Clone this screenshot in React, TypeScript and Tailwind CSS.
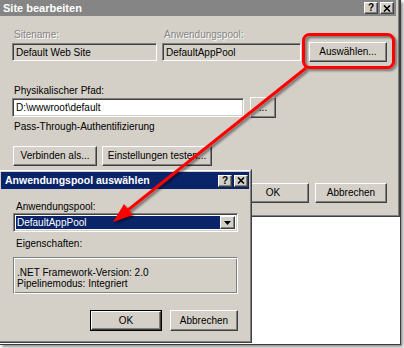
import React from 'react';

// Win2000 classic look: raised buttons, sunken fields
const RAISED =
  'bg-[#d4d0c8] border border-t-white border-l-white border-r-[#404040] border-b-[#404040] shadow-[inset_-1px_-1px_0_#808080]';
const SUNKEN =
  'border border-t-[#808080] border-l-[#808080] border-r-white border-b-white shadow-[inset_1px_1px_0_#404040,inset_-1px_-1px_0_#d4d0c8]';
const DISABLED_LABEL = 'text-[#858585] [text-shadow:1px_1px_0_#ffffff]';

const Btn: React.FC<{ className?: string; children: React.ReactNode }> = ({ className = '', children }) => (
  <div className={`flex items-center justify-center leading-none ${RAISED} ${className}`}>{children}</div>
);

const CaptionButtons: React.FC = () => (
  <div className="flex gap-[2px]">
    <div className={`w-[14px] h-[12px] flex items-center justify-center ${RAISED}`}>
      <span className="text-[10px] font-bold leading-none text-black">?</span>
    </div>
    <div className={`w-[14px] h-[12px] flex items-center justify-center ${RAISED}`}>
      <svg width="8" height="7" viewBox="0 0 8 7">
        <path d="M1 0.5 L7 6.5 M7 0.5 L1 6.5" stroke="#000" strokeWidth="1.6" />
      </svg>
    </div>
  </div>
);

const SiteDialog: React.FC = () => (
  <div className="absolute left-0 top-0 w-[400px] h-[217px] bg-[#d4d0c8] border-r border-b border-[#404040]">
    <div className="h-full border-r border-b border-[#808080] flex flex-col">
      {/* inactive title bar */}
      <div className="h-[16px] w-[396px] bg-[#858585] flex items-center justify-between pl-[3px] pr-[2px]">
        <span className="text-[11px] font-bold text-white leading-none">Site bearbeiten</span>
        <CaptionButtons />
      </div>

      <div className="pl-[12px] pr-[11px] flex flex-col">
        <div className="flex items-end mt-[13px]">
          <div className="w-[145px]">
            <div className={`pl-[2px] h-[12px] leading-[12px] ${DISABLED_LABEL}`}>Sitename:</div>
            <div className={`mt-[2px] h-[18px] flex items-center pl-[3px] ${SUNKEN}`}>Default Web Site</div>
          </div>
          <div className="w-[139px] ml-[5px]">
            <div className={`pl-[2px] h-[12px] leading-[12px] ${DISABLED_LABEL}`}>Anwendungspool:</div>
            <div className={`mt-[2px] h-[18px] flex items-center pl-[3px] ${SUNKEN}`}>DefaultAppPool</div>
          </div>
          <Btn className="ml-[8px] w-[78px] h-[20px] mb-[-1px]">Auswählen...</Btn>
        </div>

        <div className="mt-[24px] pl-[2px] h-[12px] leading-[12px]">Physikalischer Pfad:</div>
        <div className="flex items-center h-[21px]">
          <div className={`w-[232px] h-[19px] bg-white flex items-center pl-[3px] ${SUNKEN}`}>D:\wwwroot\default</div>
          <Btn className="ml-[6px] w-[26px] h-[21px]">...</Btn>
        </div>

        <div className="mt-[3px] pl-[2px] h-[12px] leading-[12px]">Pass-Through-Authentifizierung</div>

        <div className="flex mt-[13px]">
          <Btn className="ml-[1px] w-[84px] h-[20px]">Verbinden als...</Btn>
          <Btn className="ml-[5px] w-[110px] h-[20px]">Einstellungen testen...</Btn>
        </div>

        <div className="flex justify-end gap-[6px] mt-[17px]">
          <Btn className="w-[72px] h-[20px]">OK</Btn>
          <Btn className="w-[72px] h-[20px]">Abbrechen</Btn>
        </div>
      </div>
    </div>
  </div>
);

const PoolDialog: React.FC = () => (
  <div className="absolute left-[-2px] top-[169px] w-[254px] h-[174px] border border-t-[#d4d0c8] border-l-[#d4d0c8] border-r-[#404040] border-b-[#404040] bg-[#d4d0c8]">
    <div className="h-full border border-t-white border-l-white border-r-[#808080] border-b-[#808080] p-[1px] flex flex-col">
      {/* active title bar */}
      <div className="h-[17px] bg-[#0a246a] flex items-center justify-between pl-[4px] pr-[1px]">
        <span className="text-[10.5px] font-bold text-white leading-none">Anwendungspool auswählen</span>
        <CaptionButtons />
      </div>

      <div className="pl-[12px] flex flex-col">
        <div className="mt-[12px] pl-[3px] h-[12px] leading-[12px]">
          Anwendun<span className="underline underline-offset-[1px]">g</span>spool:
        </div>
        <div className={`w-[225px] h-[19px] bg-white flex items-stretch p-[2px] ${SUNKEN}`}>
          <div className="flex-1 bg-[#0a246a] text-white flex items-center pl-[1px]">DefaultAppPool</div>
          <div className={`w-[15px] flex items-center justify-center ${RAISED}`}>
            <svg width="7" height="4" viewBox="0 0 7 4">
              <path d="M0 0 H7 L3.5 4 Z" fill="#000" />
            </svg>
          </div>
        </div>

        <div className="mt-[6px] pl-[3px] h-[12px] leading-[12px]">Eigenschaften:</div>
        <div className="mt-[7px] w-[225px] h-[37px] border border-t-[#808080] border-l-[#808080] border-r-white border-b-white shadow-[inset_1px_1px_0_#ffffff,inset_-1px_-1px_0_#808080] pl-[3px] pt-[9px]">
          <div className="leading-[11px]">.NET Framework-Version: 2.0</div>
          <div className="leading-[11px]">Pipelinemodus: Integriert</div>
        </div>

        <div className="w-[225px] flex justify-end gap-[8px] mt-[16px]">
          <div className="w-[72px] h-[21px] border border-black">
            <Btn className="w-full h-full">OK</Btn>
          </div>
          <Btn className="w-[68px] h-[21px]">Abbrechen</Btn>
        </div>
      </div>
    </div>
  </div>
);

const Annotation: React.FC = () => (
  <svg
    className="absolute left-0 top-0 pointer-events-none drop-shadow-[2px_2px_1px_rgba(0,0,0,0.45)]"
    width="400"
    height="344"
    viewBox="0 0 400 344"
  >
    <rect x="303.5" y="34.5" width="90" height="33" rx="6" fill="none" stroke="#ff0000" strokeWidth="3" />
    <line x1="306" y1="68" x2="128" y2="210" stroke="#ff0000" strokeWidth="3" />
    <polygon points="113,222 133,215 124,204" fill="#ff0000" />
  </svg>
);

export default function App() {
  return (
    <div className="w-[404px] h-[348px] bg-white font-['Liberation_Sans',Arial,sans-serif] text-[10px] text-black">
      <div className="relative w-[401px] h-[345px] bg-white border-r border-b border-[#3c3c3c] shadow-[2px_2px_3px_rgba(0,0,0,0.45)] overflow-hidden">
        <SiteDialog />
        <PoolDialog />
        <Annotation />
      </div>
    </div>
  );
}
